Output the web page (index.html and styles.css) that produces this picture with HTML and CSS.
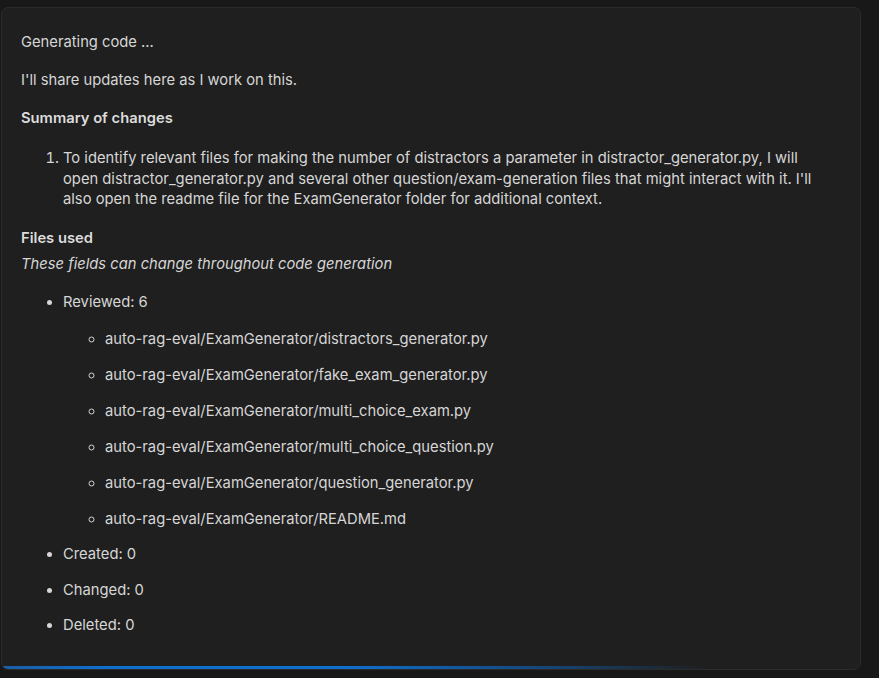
FILE: index.html
```html
<!DOCTYPE html>
<html>
<head>
<meta charset="utf-8">
<link rel="stylesheet" href="styles.css">
</head>
<body>
<div class="card">
  <p class="line">Generating code ...</p>
  <p class="line gap">I'll share updates here as I work on this.</p>
  <p class="line gap bold">Summary of changes</p>
  <ol class="steps">
    <li>To identify relevant files for making the number of distractors a parameter in distractor_generator.py, I will open distractor_generator.py and several other question/exam-generation files that might interact with it. I'll also open the readme file for the ExamGenerator folder for additional context.</li>
  </ol>
  <p class="line gap bold">Files used</p>
  <p class="line note">These fields can change throughout code generation</p>
  <ul class="files">
    <li>Reviewed: 6
      <ul class="sub">
        <li>auto-rag-eval/ExamGenerator/distractors_generator.py</li>
        <li>auto-rag-eval/ExamGenerator/fake_exam_generator.py</li>
        <li>auto-rag-eval/ExamGenerator/multi_choice_exam.py</li>
        <li>auto-rag-eval/ExamGenerator/multi_choice_question.py</li>
        <li>auto-rag-eval/ExamGenerator/question_generator.py</li>
        <li>auto-rag-eval/ExamGenerator/README.md</li>
      </ul>
    </li>
    <li>Created: 0</li>
    <li>Changed: 0</li>
    <li>Deleted: 0</li>
  </ul>
  <div class="progress"></div>
</div>
</body>
</html>
```

FILE: styles.css
```css
html, body {
  margin: 0;
  padding: 0;
  background: #181818;
}
body {
  font-family: Inter, "Noto Sans", sans-serif;
  font-size: 14.75px;
  color: #d6d6d6;
}
.card {
  position: relative;
  box-sizing: border-box;
  width: 860px;
  height: 663px;
  margin: 7px 0 0 1px;
  padding: 24px 30px 0 19px;
  background: #1f1f1f;
  border: 1px solid #2b2b2b;
  border-radius: 7px;
  overflow: hidden;
}
.line {
  margin: 0;
  line-height: 20px;
}
.gap {
  margin-top: 18px;
}
.bold {
  font-weight: 600;
  color: #dcdcdc;
}
.note {
  margin-top: 6px;
  font-style: italic;
}
.steps {
  margin: 20px 0 0 0;
  padding-left: 42px;
  line-height: 20.5px;
}
.files {
  margin: 18px 0 0 0;
  padding-left: 42px;
  list-style: disc;
  line-height: 20px;
}
.files > li {
  margin-top: 15.5px;
}
.files > li:first-child {
  margin-top: 0;
}
.sub {
  margin: 17px 0 0 0;
  padding-left: 42px;
  list-style: circle;
}
.sub li {
  margin-top: 16px;
}
.sub li:first-child {
  margin-top: 0;
}
.progress {
  position: absolute;
  left: 0;
  right: 0;
  bottom: 0;
  height: 3px;
  background: linear-gradient(90deg, #1a5ea6 0%, #0f6fce 12%, #0f6fce 40%, rgba(15, 100, 190, 0.6) 62%, rgba(15, 90, 170, 0) 82%);
}
```
